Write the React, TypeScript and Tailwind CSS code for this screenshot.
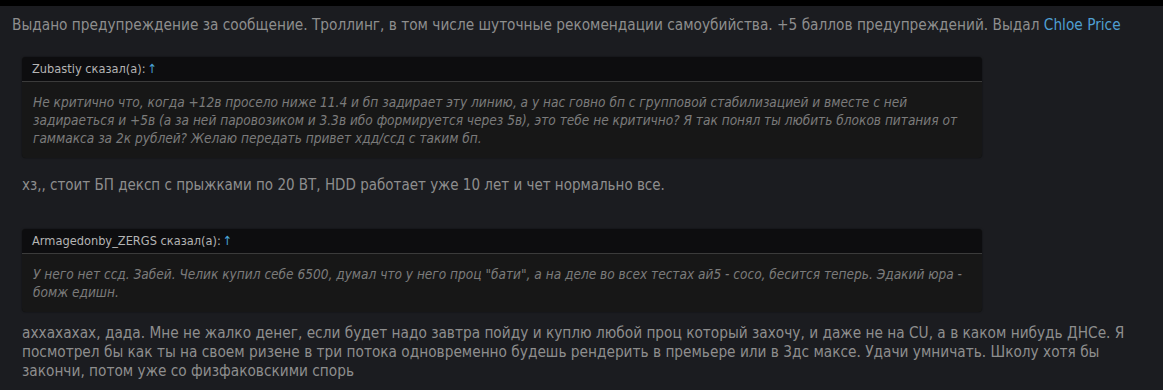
const FONT = "font-['DejaVu_Sans_Condensed','DejaVu_Sans',Tahoma,sans-serif]";

function Quote({ author, lines }: { author: string; lines: string[] }) {
  return (
    <div className="ml-[22px] w-[960px] rounded-[4px] overflow-hidden bg-[#171717] shadow-[0_0_2px_rgba(0,0,0,0.6)]">
      <div className="h-[25px] px-[10px] bg-[#0d0d0f] border-b border-[#3b3b3b] text-[12.7px] leading-[24px] text-[#b4b4b4]">
        {author} сказал(а):<span className="ml-[2px] text-[#4aa3d6]">↑</span>
      </div>
      <div className="px-[11px] py-[11px] text-[13.55px] leading-[18px] italic text-[#7b7b7b]">
        {lines.map((l, i) => (
          <div key={i} className="whitespace-nowrap">
            {l}
          </div>
        ))}
      </div>
    </div>
  );
}

export default function App() {
  return (
    <div className={`${FONT} w-full h-[390px] overflow-hidden bg-[#1b1c20]`}>
      <div className="h-[6px] bg-black" />
      <p className="pl-3 pt-[9px] text-[15.25px] leading-[21px] text-[#8e8e8e] whitespace-nowrap">
        Выдано предупреждение за сообщение. Троллинг, в том числе шуточные рекомендации самоубийства. +5 баллов
        предупреждений. Выдал <span className="text-[#4f9fd1]">Chloe Price</span>
      </p>

      <div className="mt-[21px]">
        <Quote
          author="Zubastiy"
          lines={[
            "Не критично что, когда +12в просело ниже 11.4 и бп задирает эту линию, а у нас говно бп с групповой стабилизацией и вместе с ней",
            "задираеться и +5в (а за ней паровозиком и 3.3в ибо формируется через 5в), это тебе не критично? Я так понял ты любить блоков питания от",
            "гаммакса за 2к рублей? Желаю передать привет хдд/ссд с таким бп.",
          ]}
        />
      </div>

      <p className="ml-[22px] mt-[17px] text-[15px] leading-[21px] text-[#8e8e8e]">
        хз,, стоит БП дексп с прыжками по 20 ВТ, HDD работает уже 10 лет и чет нормально все.
      </p>

      <div className="mt-[33px]">
        <Quote
          author="Armagedonby_ZERGS"
          lines={[
            "У него нет ссд. Забей. Челик купил себе 6500, думал что у него проц \"бати\", а на деле во всех тестах ай5 - сосо, бесится теперь. Эдакий юра -",
            "бомж едишн.",
          ]}
        />
      </div>

      <div className="ml-[22px] mt-[12px] text-[15.25px] leading-[19px] text-[#8e8e8e]">
        <div className="whitespace-nowrap">
          аххахахах, дада. Мне не жалко денег, если будет надо завтра пойду и куплю любой проц который захочу, и даже не на CU, а в
          каком нибудь ДНСе. Я
        </div>
        <div className="whitespace-nowrap">
          посмотрел бы как ты на своем ризене в три потока одновременно будешь рендерить в премьере или в 3дс максе. Удачи умничать.
          Школу хотя бы
        </div>
        <div className="whitespace-nowrap">закончи, потом уже со физфаковскими спорь</div>
      </div>
    </div>
  );
}
